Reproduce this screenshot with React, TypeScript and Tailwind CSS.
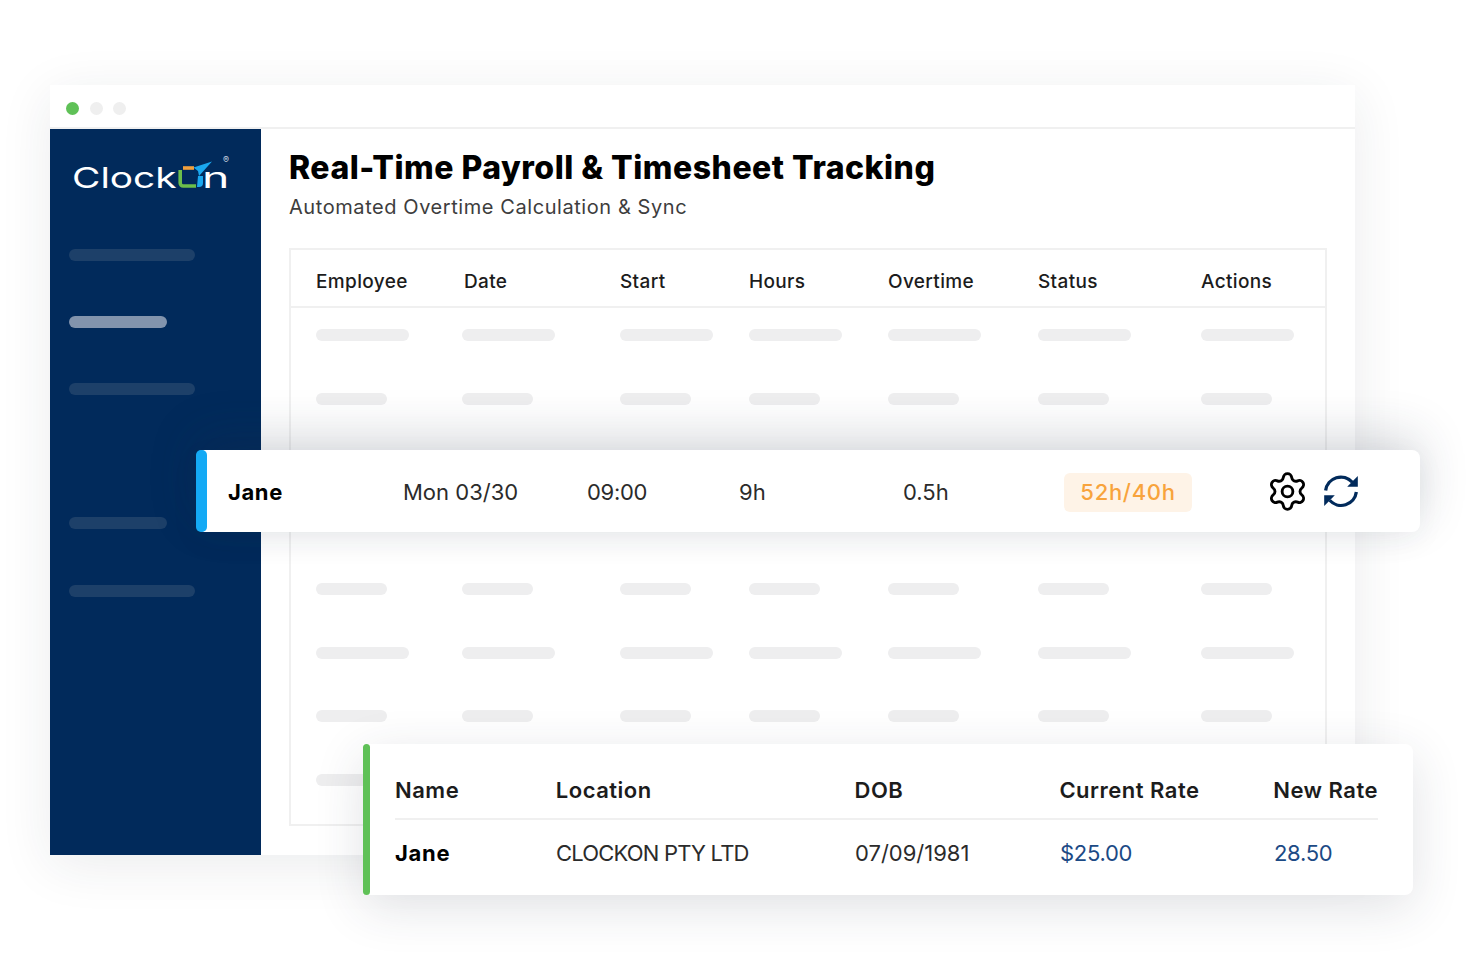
import { Settings } from "lucide-react";

const font = { fontFamily: "Inter, 'Liberation Sans', sans-serif" };

const cols = "grid grid-cols-[146px_158px_129px_139px_150px_163px_98px]";
const rowWidths = [93, 71, 93, 71, 71, 93, 71, 93];
const offsets = [0, 146, 304, 433, 572, 722, 885];
const widthClass: Record<number, string> = { 93: "w-[93px]", 71: "w-[71px]" };

function SkeletonRow({ width }: { width: number }) {
  return (
    <div className={cols}>
      {offsets.map((o) => (
        <div key={o} className={`h-3 rounded-full bg-[#eeeeef] ${widthClass[width]}`} />
      ))}
    </div>
  );
}

function Logo() {
  return (
    <div className="relative h-[30px] w-[160px] text-white">
      <span className="absolute top-[1px] left-0 origin-left scale-x-[1.34] text-[29px] leading-[26px] font-normal">
        Clock
      </span>
      <svg width="36" height="30" viewBox="0 0 36 30" className="absolute top-[-5px] left-[106px]">
        <path d="M2.2 11v13a3 3 0 0 0 3 3H18" fill="none" stroke="#6cbf4b" strokeWidth="3.6" />
        <path d="M5 9h11" stroke="#f2a03d" strokeWidth="3.6" />
        <path d="M15.5 8.5 34 2.5 21 17l-1-5z" fill="#1aa7ee" />
        <path d="M20 17h5v7a4 4 0 0 1-4 4h-2z" fill="#1aa7ee" />
      </svg>
      <span className="absolute top-[1px] left-[130px] origin-left scale-x-[1.6] text-[29px] leading-[26px] font-normal">
        n
      </span>
      <span className="absolute top-[-9px] left-[151px] text-[9px] leading-[9px] text-[#cdd6e2]">®</span>
    </div>
  );
}

function Side({ w, light }: { w: "long" | "short"; light?: boolean }) {
  return (
    <div
      className={`h-3 rounded-full ${w === "long" ? "w-[126px]" : "w-[98px]"} ${
        light ? "bg-[#8294ad]" : "bg-[#1d4069]"
      }`}
    />
  );
}

function SyncIcon() {
  return (
    <svg width="34" height="36" viewBox="0 0 33 34" fill="none" className="ml-[15px] shrink-0">
      <path d="M1.6 16.5A14.9 14.9 0 0 1 27.5 8.5" stroke="#012a5b" strokeWidth="3.2" />
      <path d="M32.8 2.5v10.3H22.5z" fill="#012a5b" />
      <path d="M31.4 18A14.9 14.9 0 0 1 5.5 26" stroke="#012a5b" strokeWidth="3.2" />
      <path d="M.2 31.5V21.2h10.3z" fill="#012a5b" />
    </svg>
  );
}

export default function App() {
  return (
    <div className="relative h-[961px] w-[1472px] overflow-hidden bg-white pt-[85px] pl-[50px]" style={font}>
      <div className="flex h-[770px] w-[1305px] flex-col bg-white shadow-[0_10px_50px_rgba(30,40,60,0.09)]">
        <div className="flex h-[44px] shrink-0 items-center gap-[10.5px] border-b-2 border-[#f0f0f0] pt-[4px] pl-4">
          <span className="size-[13px] rounded-full bg-[#5fc157]" />
          <span className="size-[13px] rounded-full bg-[#efefef]" />
          <span className="size-[13px] rounded-full bg-[#efefef]" />
        </div>
        <div className="flex min-h-0 flex-1">
          <aside className="w-[211px] shrink-0 bg-[#012a5b] pr-[19px] pl-[19px]">
            <div className="pt-[35px] pl-[3px]">
              <Logo />
            </div>
            <div className="mt-[55px] flex flex-col gap-[55px]">
              <Side w="long" />
              <Side w="short" light />
              <Side w="long" />
              <div className="h-3" />
              <Side w="short" />
              <div className="mt-px">
                <Side w="long" />
              </div>
            </div>
          </aside>
          <main className="min-w-0 flex-1 pr-[28px] pl-[28px]">
            <h1 className="mt-[19px] text-[32px] leading-[40px] font-extrabold tracking-[0.5px] whitespace-nowrap text-black">
              Real-Time Payroll &amp; Timesheet Tracking
            </h1>
            <p className="mt-[6px] text-[20px] leading-[26px] tracking-[0.57px] text-[#3d3d3d]">
              Automated Overtime Calculation &amp; Sync
            </p>
            <div className="mt-[28px] h-[578px] border-2 border-[#f0f0f0]">
              <div className="flex h-[58px] items-center border-b-2 border-[#f0f0f0] pt-[8px] pl-[25px] text-[19px] font-medium tracking-[0.35px] text-[#1c1c1c]">
                <div className={`${cols} w-full`}>
                  <span>Employee</span>
                  <span className="pl-[2px]">Date</span>
                  <span>Start</span>
                  <span>Hours</span>
                  <span>Overtime</span>
                  <span>Status</span>
                  <span>Actions</span>
                </div>
              </div>
              <div className="flex flex-col gap-[51.5px] pt-[21px] pl-[25px]">
                {rowWidths.map((w, i) => (
                  <SkeletonRow key={i} width={w} />
                ))}
              </div>
            </div>
          </main>
        </div>
      </div>

      {/* Floating timesheet row */}
      <div className="absolute top-[450px] left-[196px] flex h-[82px] w-[1224px] items-center rounded-lg bg-white text-[22px] text-[#2b2b2b] shadow-[0_-14px_48px_rgba(40,50,70,0.18),0_8px_30px_rgba(40,50,70,0.05)]">
        <div className="h-full w-[11px] shrink-0 rounded-[5px] bg-[#14aaf5]" />
        <span className="mt-[2px] ml-[21px] w-[175px] font-bold tracking-[0.6px] text-black">Jane</span>
        <span className="mt-[2px] w-[184px]">Mon 03/30</span>
        <span className="mt-[2px] w-[152px] tracking-[-0.3px]">09:00</span>
        <span className="mt-[2px] w-[164px]">9h</span>
        <span className="mt-[2px] w-[161px]">0.5h</span>
        <span className="mt-[2px] flex h-[39px] w-[128px] items-center justify-center rounded-md bg-[#fef3e7] font-medium tracking-[0.7px] text-[#f8a33c]">
          52h/40h
        </span>
        <Settings className="ml-[74px] shrink-0 text-black" size={43} strokeWidth={1.6} />
        <SyncIcon />
      </div>

      {/* Floating rate card */}
      <div className="absolute top-[744px] left-[363px] flex h-[151px] w-[1050px] rounded-r-lg bg-white shadow-[0_12px_50px_rgba(40,50,70,0.14)]">
        <div className="h-full w-[7px] shrink-0 rounded-full bg-[#5fc157]" />
        <div className="ml-[25px] w-[983px] text-[22px]">
          <div className="flex h-[76px] items-end border-b-2 border-[#f0f0f0] pb-[11px] font-semibold tracking-[0.5px] text-[#1c1c1c]">
            <span className="w-[161px]">Name</span>
            <span className="w-[299px]">Location</span>
            <span className="w-[205px]">DOB</span>
            <span className="w-[214px] whitespace-nowrap">Current Rate</span>
            <span className="whitespace-nowrap">New Rate</span>
          </div>
          <div className="flex h-[66px] items-center text-[#2b2b2b]">
            <span className="w-[161px] font-bold tracking-[0.7px] text-black">Jane</span>
            <span className="w-[299px] tracking-[-0.8px]">CLOCKON PTY LTD</span>
            <span className="w-[205px]">07/09/1981</span>
            <span className="w-[214px] tracking-[-0.3px] text-[#1c4a85]">$25.00</span>
            <span className="tracking-[-0.3px] text-[#1c4a85]">28.50</span>
          </div>
        </div>
      </div>
    </div>
  );
}
